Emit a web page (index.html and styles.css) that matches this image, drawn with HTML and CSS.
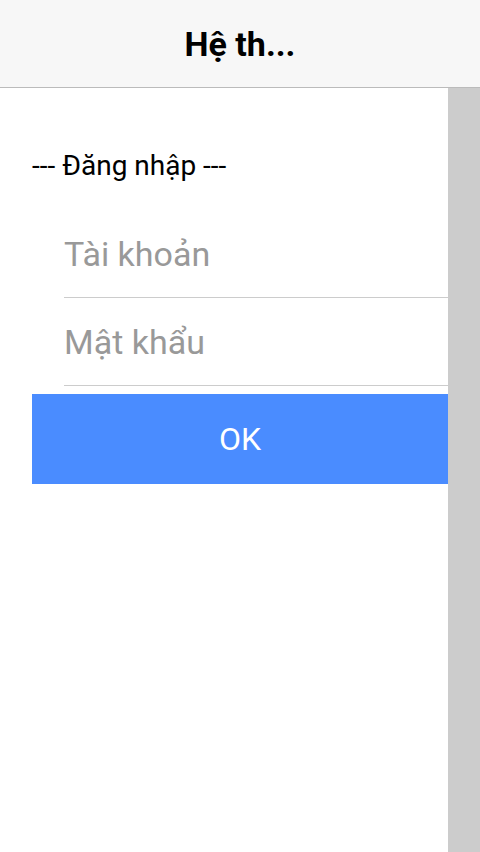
FILE: index.html
```html
<!DOCTYPE html>
<html lang="vi">
<head>
<meta charset="utf-8">
<title>Hệ thống</title>
<link rel="stylesheet" href="styles.css">
</head>
<body>
<header class="topbar"><h1 class="title">Hệ th...</h1></header>
<div class="main">
  <div class="content">
    <div class="legend">--- Đăng nhập ---</div>
    <div class="fields">
      <div class="field"><span class="placeholder">Tài khoản</span></div>
      <div class="field"><span class="placeholder">Mật khẩu</span></div>
    </div>
    <button class="ok">OK</button>
  </div>
  <div class="scrollbar"></div>
</div>
</body>
</html>
```
FILE: styles.css
```css
html, body {
  margin: 0;
  padding: 0;
  height: 100%;
  background: #fff;
  font-family: Roboto, "Noto Sans", sans-serif;
}
body {
  display: flex;
  flex-direction: column;
  height: 852px;
  overflow: hidden;
}
.topbar {
  height: 87px;
  flex: none;
  background: #f7f7f7;
  border-bottom: 1px solid #bbbbbb;
  display: flex;
  align-items: center;
  justify-content: center;
}
.title {
  margin: 0;
  font-size: 34px;
  font-weight: 700;
  color: #000;
}
.main {
  flex: 1;
  display: flex;
}
.content {
  flex: 1;
  padding: 58px 0 0 32px;
}
.scrollbar {
  width: 32px;
  flex: none;
  background: #cccccc;
}
.legend {
  font-size: 28px;
  color: #000;
  line-height: 40px;
}
.fields {
  margin-top: 24px;
  padding-left: 32px;
}
.field {
  height: 87px;
  border-bottom: 1px solid #cccccc;
  display: flex;
  align-items: center;
}
.placeholder {
  font-size: 34px;
  color: #999999;
}
.ok {
  display: block;
  width: 100%;
  height: 90px;
  margin-top: 8px;
  border: none;
  background: #4a8cff;
  color: #fff;
  font-family: Roboto, "Noto Sans", sans-serif;
  font-size: 32px;
  padding: 0;
}
```
